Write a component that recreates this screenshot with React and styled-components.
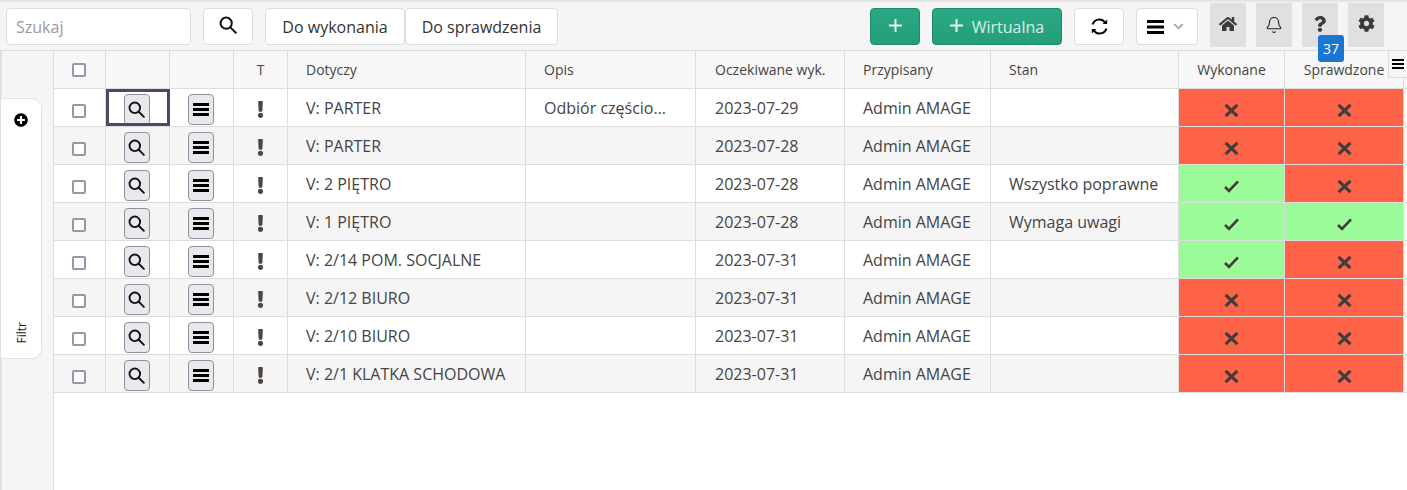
import React from 'react';
import styled, { createGlobalStyle } from 'styled-components';
import { FaHome, FaQuestion, FaCog, FaPlusCircle, FaExclamation, FaChevronDown } from 'react-icons/fa';
import { Bell } from 'lucide-react';

const Global = createGlobalStyle`
  html, body { margin: 0; padding: 0; background: #fff; }
  body { font-family: "Open Sans", "Noto Sans", sans-serif; color: #444; overflow: hidden; }
  * { box-sizing: border-box; }
`;

const Page = styled.div`width: 1407px; height: 490px; display: flex; flex-direction: column; overflow: hidden;`;

const Toolbar = styled.div`
  height: 51px; flex: none; background: #f5f5f5; border-top: 2px solid #e4e4e4; border-bottom: 1px solid #ddd;
  display: flex; align-items: flex-start; padding: 6px 0 0 6px; position: relative;
`;
const SearchInput = styled.div`
  width: 185px; height: 37px; background: #fff; border: 1px solid #ddd; border-radius: 4px;
  font-size: 16px; color: #9a9a9a; padding: 0 9px; display: flex; align-items: center;
`;
const ToolButton = styled.button`
  height: 37px; width: ${p => p.$w}px; margin-left: ${p => p.$ml ?? 0}px; flex: none; background: #fff;
  border: 1px solid #ddd; border-radius: 4px; font: 400 16px "Open Sans", sans-serif; color: #333;
  display: flex; align-items: center; justify-content: center; gap: ${p => p.$gap ?? 9}px; padding: 0 ${p => p.$pr ?? 0}px 0 0;
`;
const GreenButton = styled(ToolButton)`
  background: linear-gradient(#2aa985, #249e7b); border-color: #1d8a6c; color: #d8f0e7;
`;
const RaisedGlyph = styled.span`display: flex; margin-top: -${p => p.$up ?? 2}px;`;
const Spacer = styled.div`flex: 1;`;
const IconTiles = styled.div`display: flex; gap: 10px; margin: -5px 23px 0 12px;`;
const IconTile = styled.div`
  width: 36px; height: 44px; background: #e0e0e0; color: #3a3a3a; display: flex; align-items: center; justify-content: center;
  padding-bottom: ${p => p.$pb ?? 3}px; position: relative;
`;
const Badge = styled.div`
  position: absolute; left: 16px; top: 32px; width: 26px; height: 27px; background: #1976d2; color: #fff;
  font-size: 14px; border-radius: 3px; display: flex; align-items: center; justify-content: center; z-index: 3;
`;

const Body = styled.div`flex: 1; display: flex; min-height: 0;`;
const Rail = styled.div`
  width: 54px; flex: none; background: #f5f5f5; border-right: 1px solid #ddd; padding-top: 47px;
  border-left: 2px solid #e0e0e0;
`;
const FilterTab = styled.div`
  width: 41px; height: 261px; margin-left: -1px; background: #fff; border: 1px solid #e3e3e3; border-left: none;
  border-radius: 0 10px 10px 0; display: flex; flex-direction: column; align-items: center; justify-content: space-between;
  padding: 14px 0 15px; color: #000;
`;
const FilterLabel = styled.span`
  writing-mode: vertical-rl; transform: rotate(180deg); font-size: 12px; color: #222; line-height: 16px; margin-left: 2px;
`;

const Grid = styled.div`flex: 1; position: relative; min-width: 0;`;
const Row = styled.div`
  display: grid; grid-template-columns: 52px 64px 64px 54px 238px 170px 149px 146px 188px 106px 119px 4px;
  height: 38px; background: ${p => p.$bg};
  border-bottom: 1px solid #ddd;
`;
const Cell = styled.div`
  border-right: 1px solid #ddd; display: flex; align-items: center; overflow: hidden; white-space: nowrap;
  justify-content: ${p => p.$center ? 'center' : 'flex-start'};
  padding: ${p => p.$center ? '0' : `0 0 0 ${p.$pl ?? 18}px`};
  font-size: 16px; color: #444; background: ${p => p.$tone || 'transparent'};
  ${p => p.$focus && 'outline: 3px solid #4a4a68; outline-offset: -3px;'}
`;
const HeadCell = styled(Cell)`font-size: 14px; color: #444;`;
const Checkbox = styled.span`
  width: 14px; height: 14px; background: #fff; border: 2px solid #9896a6; border-radius: 2px; display: block;
  margin: ${p => p.$mt ?? 7}px 2px 0 0;
`;
const RowButton = styled.button`
  width: 26px; height: 31px; padding: 0; background: #e9e9ed; border: 1px solid #8f8f9d; border-radius: 4px;
  display: flex; align-items: center; justify-content: center; color: #000; margin: 3px 2px 0 0;
`;
const Corner = styled.div`
  position: absolute; right: 0; top: 0; width: 19px; height: 27px; background: #f5f5f5; border: 1px solid #ddd; border-right: none; border-top: none;
  display: flex; align-items: center; justify-content: center; z-index: 2; color: #222;
`;

const SearchGlyph = ({ size = 18 }) => (
  <svg width={size} height={size} viewBox="0 0 18 18" fill="none" stroke="#111" strokeWidth="2">
    <circle cx="7.2" cy="7.2" r="5.6" /><path d="M11.4 11.4l5.4 5.4" strokeLinecap="round" />
  </svg>
);
const Bars = ({ w = 16, h = 13, t = 3 }) => (
  <svg width={w} height={h} viewBox={`0 0 ${w} ${h}`} fill="#000">
    <rect y="0" width={w} height={t} /><rect y={(h - t) / 2} width={w} height={t} /><rect y={h - t} width={w} height={t} />
  </svg>
);
const Plus = ({ c = 13 }) => (
  <svg width={c} height={c} viewBox="0 0 13 13" stroke="#eaf7f2" strokeWidth="2"><path d="M6.5 0v13M0 6.5h13" /></svg>
);
const Refresh = () => (
  <svg width="17" height="17" viewBox="0 0 17 17" fill="none" stroke="#000" strokeWidth="2">
    <path d="M1.6 6.6A7 7 0 0 1 14 4.4" /><path d="M15.4 10.4A7 7 0 0 1 3 12.6" />
    <path d="M11.6 6h4.6V1.6z" fill="#000" stroke="none" /><path d="M5.4 11H.8v4.4z" fill="#000" stroke="none" />
  </svg>
);
const Cross = () => (
  <svg width="15" height="13" viewBox="0 0 15 13" stroke="#3d3d3d" strokeWidth="3" fill="none"><path d="M1.6 0.8l11.8 11.4M13.4 0.8L1.6 12.2" /></svg>
);
const Tick = () => (
  <svg width="15" height="13" viewBox="0 0 15 13" stroke="#3d3d3d" strokeWidth="2.6" fill="none"><path d="M1 7l4 4L14 1.4" /></svg>
);

const rows = [
  ['V: PARTER', 'Odbiór częścio…', '2023-07-29', '', 0, 0],
  ['V: PARTER', '', '2023-07-28', '', 0, 0],
  ['V: 2 PIĘTRO', '', '2023-07-28', 'Wszystko poprawne', 1, 0],
  ['V: 1 PIĘTRO', '', '2023-07-28', 'Wymaga uwagi', 1, 1],
  ['V: 2/14 POM. SOCJALNE', '', '2023-07-31', '', 1, 0],
  ['V: 2/12 BIURO', '', '2023-07-31', '', 0, 0],
  ['V: 2/10 BIURO', '', '2023-07-31', '', 0, 0],
  ['V: 2/1 KLATKA SCHODOWA', '', '2023-07-31', '', 0, 0],
];
const StatusIcon = styled.span`display: flex; margin-top: 5px;`;
const Mark = styled.span`display: flex; color: #4f473f; margin-top: 4px;`;
const Status = ({ ok }) => (
  <Cell $center $tone={ok ? '#9bfb98' : '#ff6347'}>
    <StatusIcon>{ok ? <Tick /> : <Cross />}</StatusIcon>
  </Cell>
);

export default function App() {
  return (
    <Page>
      <Global />
      <Toolbar>
        <SearchInput>Szukaj</SearchInput>
        <ToolButton $w={50} $ml={12}><RaisedGlyph $up={3}><SearchGlyph /></RaisedGlyph></ToolButton>
        <ToolButton $w={140} $ml={12}>Do wykonania</ToolButton>
        <ToolButton $w={153}>Do sprawdzenia</ToolButton>
        <Spacer />
        <GreenButton $w={50}><RaisedGlyph><Plus /></RaisedGlyph></GreenButton>
        <GreenButton $w={130} $ml={12}><RaisedGlyph><Plus /></RaisedGlyph>Wirtualna</GreenButton>
        <ToolButton $w={50} $ml={12}><RaisedGlyph $up={1}><Refresh /></RaisedGlyph></ToolButton>
        <ToolButton $w={62} $ml={12} $gap={9} $pr={4}><Bars w={17} h={14} /><FaChevronDown size={11} color="#a8a8a8" /></ToolButton>
        <IconTiles>
          <IconTile><FaHome size={18} /></IconTile>
          <IconTile $pb={1}><Bell size={18} strokeWidth={1.5} color="#222" /></IconTile>
          <IconTile><FaQuestion size={16} /><Badge>37</Badge></IconTile>
          <IconTile><FaCog size={17} /></IconTile>
        </IconTiles>
      </Toolbar>
      <Body>
        <Rail>
          <FilterTab>
            <FaPlusCircle size={14} />
            <FilterLabel>Filtr</FilterLabel>
          </FilterTab>
        </Rail>
        <Grid>
          <Corner><Bars w={12} h={10} t={2} /></Corner>
          <Row $bg="#f7f7f7">
            <HeadCell $center><Checkbox $mt={1} /></HeadCell>
            <HeadCell $center />
            <HeadCell $center />
            <HeadCell $center>T</HeadCell>
            <HeadCell>Dotyczy</HeadCell>
            <HeadCell>Opis</HeadCell>
            <HeadCell $pl={19}>Oczekiwane wyk.</HeadCell>
            <HeadCell>Przypisany</HeadCell>
            <HeadCell>Stan</HeadCell>
            <HeadCell $center>Wykonane</HeadCell>
            <HeadCell $center>Sprawdzone</HeadCell>
            <HeadCell $center />
          </Row>
          {rows.map((r, i) => (
            <Row key={i} $bg={i % 2 ? '#f5f5f5' : '#fff'}>
              <Cell $center><Checkbox /></Cell>
              <Cell $center $focus={i === 0}><RowButton><SearchGlyph size={17} /></RowButton></Cell>
              <Cell $center><RowButton><Bars /></RowButton></Cell>
              <Cell $center><Mark><FaExclamation size={17} /></Mark></Cell>
              <Cell>{r[0]}</Cell>
              <Cell>{r[1]}</Cell>
              <Cell $pl={19}>{r[2]}</Cell>
              <Cell>Admin AMAGE</Cell>
              <Cell>{r[3]}</Cell>
              <Status ok={r[4]} />
              <Status ok={r[5]} />
              <Cell $center />
            </Row>
          ))}
        </Grid>
      </Body>
    </Page>
  );
}
